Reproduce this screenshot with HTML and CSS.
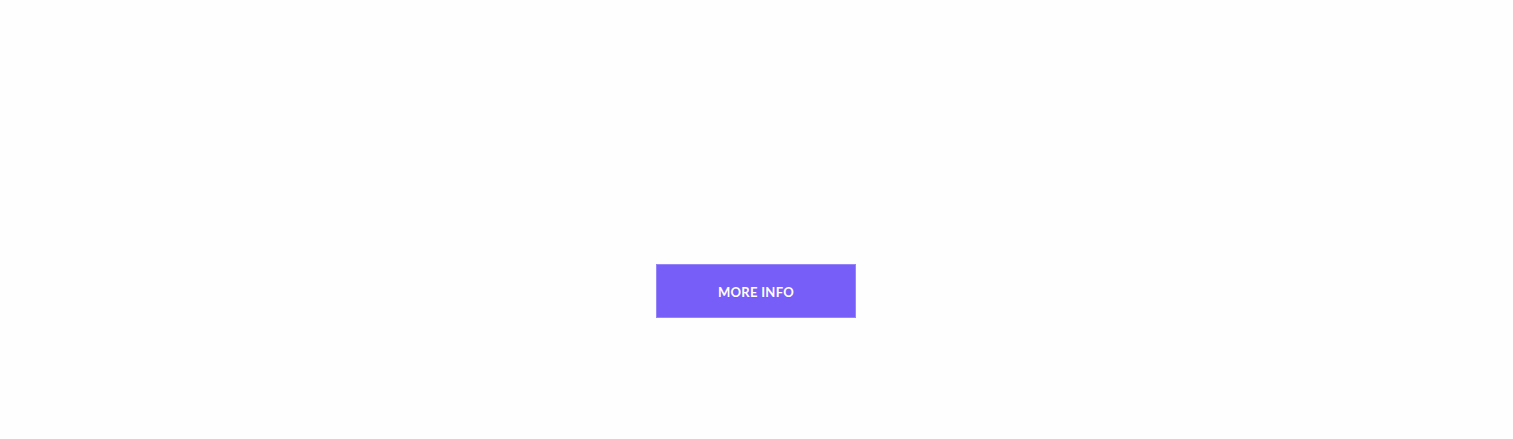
FILE: index.html
```html
<!DOCTYPE html>
<html>
<head>
<meta charset="utf-8">
<link rel="stylesheet" href="styles.css">
</head>
<body>
<div class="page">
  <a class="btn" href="#">MORE INFO</a>
</div>
</body>
</html>
```
FILE: styles.css
```css
html, body {
  margin: 0;
  padding: 0;
  background: #fefefe;
}
.page {
  height: 439px;
  display: flex;
  justify-content: center;
  align-items: flex-start;
  padding-top: 264px;
  box-sizing: border-box;
}
.btn {
  width: 200px;
  height: 54px;
  box-sizing: border-box;
  display: flex;
  align-items: center;
  justify-content: center;
  background: #785ef9;
  border: 1px solid #9684fa;
  color: #ffffff;
  text-decoration: none;
  font-family: Lato, "Open Sans", sans-serif;
  font-weight: 700;
  font-size: 13px;
  letter-spacing: 0.3px;
  margin-right: 1px;
  padding-top: 1px;
}
```
